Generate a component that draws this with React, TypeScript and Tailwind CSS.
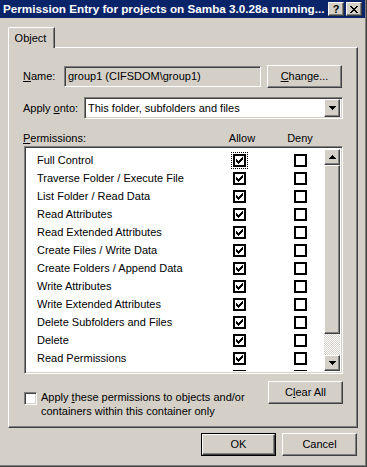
const raised =
  'border border-t-white border-l-white border-r-[#404040] border-b-[#404040] shadow-[inset_-1px_-1px_0_#808080]';
const sunken =
  'border border-t-[#808080] border-l-[#808080] border-r-white border-b-white shadow-[inset_1px_1px_0_#404040,inset_-1px_-1px_0_#d4d0c8]';

const perms = [
  'Full Control',
  'Traverse Folder / Execute File',
  'List Folder / Read Data',
  'Read Attributes',
  'Read Extended Attributes',
  'Create Files / Write Data',
  'Create Folders / Append Data',
  'Write Attributes',
  'Write Extended Attributes',
  'Delete Subfolders and Files',
  'Delete',
  'Read Permissions',
  'Change Permissions',
  'Take Ownership',
];

function Check() {
  return (
    <svg width="7" height="7" viewBox="0 0 7 7" shapeRendering="crispEdges" className="block">
      <path
        d="M6 0h1v3h-1zM5 1h1v3h-1zM4 2h1v3h-1zM0 2h1v3h-1zM1 3h1v3h-1zM2 4h1v3h-1zM3 3h1v3h-1z"
        fill="#000"
      />
    </svg>
  );
}

function FlatBox({ checked }: { checked?: boolean }) {
  return (
    <span className="w-[13px] h-[13px] border-2 border-black bg-white flex items-center justify-center shrink-0">
      {checked && <Check />}
    </span>
  );
}

function Arrow({ up }: { up?: boolean }) {
  return (
    <svg width="7" height="4" viewBox="0 0 7 4" shapeRendering="crispEdges">
      <path d={up ? 'M3 0h1v1h1v1h1v1h1v1h-7v-1h1v-1h1v-1h1z' : 'M0 0h7v1h-1v1h-1v1h-1v1h-1v-1h-1v-1h-1v-1h-1z'} fill="#000" />
    </svg>
  );
}

function Btn({ label, u, def }: { label: string; u: number; def?: boolean }) {
  if (u < 0) {
    return (
      <div className={`w-[75px] h-[23px] flex ${def ? 'border border-black' : ''}`}>
        <span className={`${raised} bg-[#d4d0c8] w-full h-full flex items-center justify-center`}>{label}</span>
      </div>
    );
  }
  return (
    <div className="w-[75px] h-[23px] flex">
      <span className={`${raised} bg-[#d4d0c8] w-full h-full flex items-center justify-center`}>
        {label.slice(0, u)}
        <span className="underline underline-offset-1">{label[u]}</span>
        {label.slice(u + 1)}
      </span>
    </div>
  );
}

export default function App() {
  return (
    <div className="w-[367px] h-[467px] bg-[#d4d0c8] border-r border-b border-[#404040] shadow-[inset_-1px_-1px_0_#808080] flex flex-col text-[11px] text-black [font-family:'Liberation_Sans',Arial,sans-serif] overflow-hidden">
      {/* title bar */}
      <div className="h-[18px] mr-[1px] bg-[#0a246a] flex items-center pl-[3px] pr-[3px] shrink-0">
        <span className="flex-1 text-white font-bold text-[11.7px] whitespace-nowrap overflow-hidden leading-[18px]">
          Permission Entry for projects on Samba 3.0.28a running...
        </span>
        <span className={`${raised} bg-[#d4d0c8] w-[16px] h-[14px] flex items-center justify-center font-bold text-[11px] leading-none`}>
          ?
        </span>
        <span className={`${raised} bg-[#d4d0c8] w-[16px] h-[14px] ml-[2px] flex items-center justify-center`}>
          <svg width="8" height="7" viewBox="0 0 8 7" shapeRendering="crispEdges">
            <path d="M0 0h2v1h1v1h2v-1h1v-1h2v1h-1v1h-1v1h-1v1h1v1h1v1h1v1h-2v-1h-1v-1h-2v1h-1v1h-2v-1h1v-1h1v-1h1v-1h-1v-1h-1v-1h-1z" fill="#000" />
          </svg>
        </span>
      </div>

      {/* tab */}
      <div className="ml-[8px] mt-[9px] w-[47px] h-[21px] -mb-[1px] relative z-10 bg-[#d4d0c8] border-l border-t border-white border-r border-r-[#404040] shadow-[inset_-1px_0_0_#808080] rounded-tl-[2px] flex items-center justify-center pr-[2px]">
        Object
      </div>

      {/* panel */}
      <div className="ml-[8px] w-[350px] h-[381px] border-l border-t border-white border-r border-b border-r-[#404040] border-b-[#404040] shadow-[inset_-1px_-1px_0_#808080] flex flex-col shrink-0">
        <div className="mt-[16px] h-[24px] pl-[14px] flex items-center">
          <span className="w-[41px]">
            <span className="underline underline-offset-1">N</span>ame:
          </span>
          <div className={`${sunken} w-[197px] h-[21px] bg-[#d4d0c8] flex items-center pl-[3px] whitespace-nowrap`}>
            group1 (CIFSDOM\group1)
          </div>
          <div className="ml-[6px]">
            <Btn label="Change..." u={0} />
          </div>
        </div>

        <div className="mt-[9px] h-[22px] pl-[14px] flex items-center">
          <span className="w-[61px]">
            Apply <span className="underline underline-offset-1">o</span>nto:
          </span>
          <div className={`${sunken} w-[259px] h-[22px] bg-white flex items-center`}>
            <span className="flex-1 pl-[3px] whitespace-nowrap">This folder, subfolders and files</span>
            <span className={`${raised} bg-[#d4d0c8] w-[16px] h-[18px] mr-[2px] flex items-center justify-center`}>
              <Arrow />
            </span>
          </div>
        </div>

        <div className="mt-[12px] h-[14px] pl-[14px] flex items-center leading-[14px]">
          <span className="w-[199px]">
            <span className="underline underline-offset-1">P</span>ermissions:
          </span>
          <span className="w-[40px] text-center">Allow</span>
          <span className="w-[40px] ml-[18px] text-center">Deny</span>
        </div>

        <div className={`${sunken} ml-[15px] mt-[1px] w-[319px] h-[228px] bg-white flex p-[2px]`}>
          <div className="flex-1 overflow-hidden pt-[2px]">
            {perms.map((p, i) => (
              <div key={p} className="h-[18px] flex items-center pl-[10px] whitespace-nowrap">
                <span className="w-[196px]">{p}</span>
                {i === 0 ? (
                  <span className="outline-1 outline-dotted outline-black outline-offset-[1px] flex">
                    <FlatBox checked />
                  </span>
                ) : (
                  <FlatBox checked />
                )}
                <span className="ml-[48px] flex">
                  <FlatBox />
                </span>
              </div>
            ))}
          </div>
          <div className="w-[16px] flex flex-col">
            <span className={`${raised} bg-[#d4d0c8] h-[16px] flex items-center justify-center`}>
              <Arrow up />
            </span>
            <span className={`${raised} bg-[#d4d0c8] h-[169px]`} />
            <span className="flex-1 bg-[repeating-conic-gradient(#d4d0c8_0%_25%,#ffffff_0%_50%)] bg-[length:2px_2px]" />
            <span className={`${raised} bg-[#d4d0c8] h-[16px] flex items-center justify-center`}>
              <Arrow />
            </span>
          </div>
        </div>

        <div className="ml-[15px] mt-[7px] w-[319px] flex items-start justify-between">
          <div className="mt-[9px] flex items-start gap-[4px]">
            <span className={`${sunken} mt-[2px] w-[13px] h-[13px] bg-white shrink-0`} />
            <span className="leading-[14px] whitespace-nowrap">
              Apply <span className="underline underline-offset-1">t</span>hese permissions to objects and/or
              <br />
              containers within this container only
            </span>
          </div>
          <Btn label="Clear All" u={1} />
        </div>
      </div>

      <div className="mt-[5px] mr-[9px] flex justify-end gap-[6px]">
        <Btn label="OK" u={-1} def />
        <Btn label="Cancel" u={-1} />
      </div>
    </div>
  );
}
